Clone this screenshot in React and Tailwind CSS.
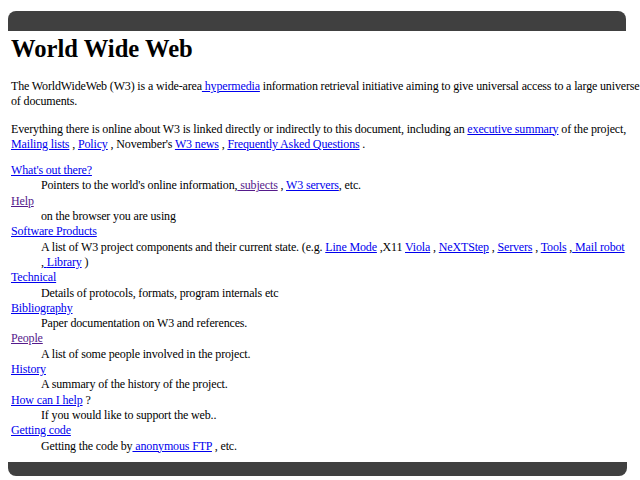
import React from "react";

const A = ({ children, v }) => (
  <a href="#" className={v ? "text-[#551a8b] underline" : "text-[#0000ee] underline"}>
    {children}
  </a>
);

const Dt = ({ children }) => <dt>{children}</dt>;
const Dd = ({ children }) => <dd className="pl-[30px]">{children}</dd>;

export default function App() {
  return (
    <div className="w-[640px] h-[480px] bg-white overflow-hidden font-['Liberation_Serif',serif] text-[12px] leading-[15.3px] tracking-[-0.15px] text-black flex flex-col">
      <div className="ml-[8px] mt-[11px] h-[20px] w-[618px] rounded-t-[8px] bg-[#404040] shrink-0" />
      <div className="pl-[11px] pr-0 flex-1">
        <h1 className="text-[24.6px] font-bold leading-[28px] tracking-normal mt-[4px]">World Wide Web</h1>
        <p className="mt-[16px]">
          The WorldWideWeb (W3) is a wide-area<A> hypermedia</A> information retrieval initiative aiming to give universal access to a large universe of documents.
        </p>
        <p className="mt-[12px]">
          Everything there is online about W3 is linked directly or indirectly to this document, including an <A>executive summary</A> of the project, <A>Mailing lists</A> , <A>Policy</A> , November's <A>W3 news</A> , <A>Frequently Asked Questions</A> .
        </p>
        <dl className="mt-[11px]">
          <Dt><A>What's out there?</A></Dt>
          <Dd>Pointers to the world's online information,<A v> subjects</A> , <A>W3 servers</A>, etc.</Dd>
          <Dt><A v>Help</A></Dt>
          <Dd>on the browser you are using</Dd>
          <Dt><A>Software Products</A></Dt>
          <Dd>
            A list of W3 project components and their current state. (e.g. <A>Line Mode</A> ,X11 <A>Viola</A> , <A>NeXTStep</A> , <A>Servers</A> , <span className="whitespace-nowrap"><A>Tools</A> ,<A> Mail robot</A></span>{" "}
            <span className="whitespace-nowrap">,<A>{"\u00a0"}Library</A> )</span>
          </Dd>
          <Dt><A>Technical</A></Dt>
          <Dd>Details of protocols, formats, program internals etc</Dd>
          <Dt><A>Bibliography</A></Dt>
          <Dd>Paper documentation on W3 and references.</Dd>
          <Dt><A v>People</A></Dt>
          <Dd>A list of some people involved in the project.</Dd>
          <Dt><A>History</A></Dt>
          <Dd>A summary of the history of the project.</Dd>
          <Dt><A>How can I help</A> ?</Dt>
          <Dd>If you would like to support the web..</Dd>
          <Dt><A>Getting code</A></Dt>
          <Dd>Getting the code by<A> anonymous FTP</A> , etc.</Dd>
        </dl>
      </div>
      <div className="ml-[8px] mb-[4px] h-[14px] w-[619px] rounded-b-[8px] bg-[#404040] shrink-0" />
    </div>
  );
}
